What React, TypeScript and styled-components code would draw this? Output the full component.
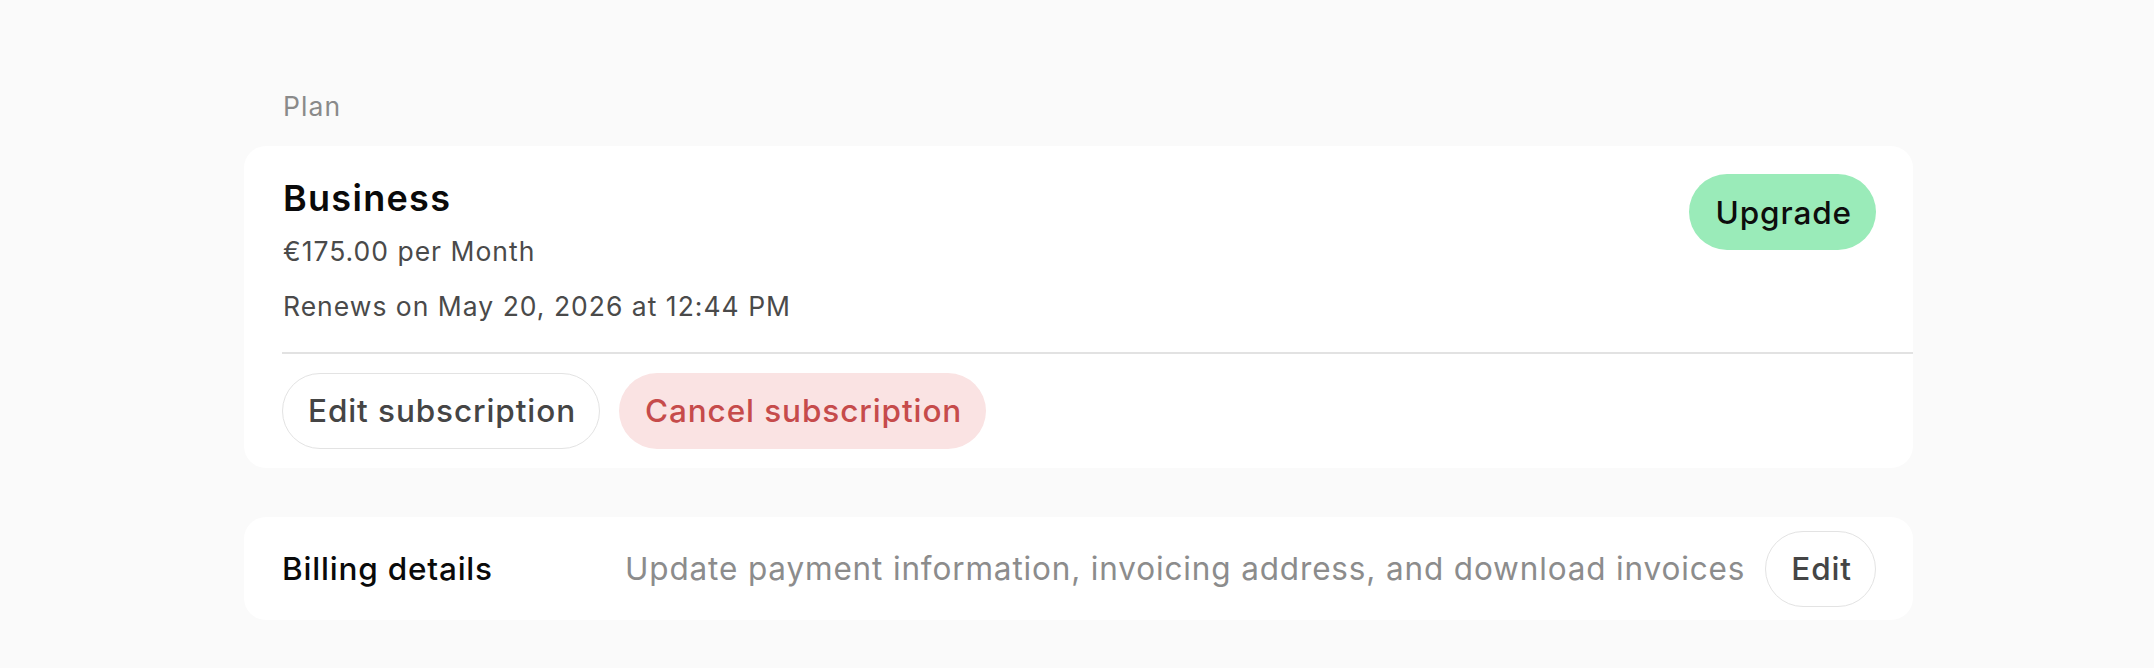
import React from "react";
import styled, { createGlobalStyle } from "styled-components";

const GlobalStyle = createGlobalStyle`
  html, body {
    margin: 0;
    padding: 0;
    background: #fafafa;
    font-family: Inter, "Noto Sans", "Liberation Sans", sans-serif;
    -webkit-font-smoothing: antialiased;
  }
`;

const Page = styled.div`
  width: 1669px;
  margin-left: 244px;
  padding-top: 86px;
  display: flex;
  flex-direction: column;
`;

const SectionLabel = styled.div`
  font-size: 26.5px;
  letter-spacing: 1.1px;
  line-height: 40px;
  color: #8a8a8a;
  padding-left: 39px;
  margin-bottom: 20px;
`;

const Card = styled.div`
  background: #ffffff;
  border-radius: 22px;
`;

const PlanCard = styled(Card)`
  padding-top: 28px;
`;

const Header = styled.div`
  display: flex;
  justify-content: space-between;
  align-items: flex-start;
  padding: 0 37px 0 39px;
`;

const Info = styled.div`
  display: flex;
  flex-direction: column;
`;

const PlanName = styled.div`
  font-size: 36px;
  letter-spacing: 1.3px;
  line-height: 46px;
  margin-top: 1px;
  font-weight: 600;
  color: #0a0a0a;
`;

const Detail = styled.div<{ $gap: number }>`
  font-size: 26.5px;
  letter-spacing: 1px;
  line-height: 40px;
  color: #4a4a4a;
  margin-top: ${(p) => p.$gap}px;
`;

const Divider = styled.div`
  height: 1.5px;
  background: #e2e2e2;
  margin: 26px 0 0 38px;
`;

const Actions = styled.div`
  display: flex;
  gap: 19px;
  padding: 19px 38px 19px 38px;
`;

const Pill = styled.button<{ $variant: "outline" | "danger" | "success" }>`
  font-family: inherit;
  font-size: 31.5px;
  letter-spacing: 0.9px;
  font-weight: 500;
  height: 76px;
  padding: 0 23px 0 25px;
  border-radius: 38px;
  cursor: pointer;
  white-space: nowrap;
  display: inline-flex;
  align-items: center;
  justify-content: center;
  box-sizing: border-box;
  border: 1.5px solid
    ${(p) => (p.$variant === "outline" ? "#e3e3e3" : "transparent")};
  background: ${(p) =>
    p.$variant === "danger"
      ? "#fae3e3"
      : p.$variant === "success"
      ? "#9aebb9"
      : "#ffffff"};
  color: ${(p) =>
    p.$variant === "danger"
      ? "#c64b4b"
      : p.$variant === "success"
      ? "#0d0d0d"
      : "#454545"};
`;

const BillingCard = styled(Card)`
  margin-top: 49px;
  display: grid;
  grid-template-columns: 343px 1fr auto;
  align-items: center;
  padding: 14px 37px 13px 38px;
`;

const BillingTitle = styled.div`
  font-size: 31.5px;
  letter-spacing: 0.8px;
  font-weight: 500;
  color: #0a0a0a;
`;

const BillingDesc = styled.div`
  font-size: 31.5px;
  letter-spacing: 0.85px;
  color: #8c8c8c;
  white-space: nowrap;
`;

export default function App() {
  return (
    <>
      <GlobalStyle />
      <Page>
        <SectionLabel>Plan</SectionLabel>
        <PlanCard>
          <Header>
            <Info>
              <PlanName>Business</PlanName>
              <Detail $gap={10}>€175.00 per Month</Detail>
              <Detail $gap={15}>Renews on May 20, 2026 at 12:44 PM</Detail>
            </Info>
            <Pill $variant="success">Upgrade</Pill>
          </Header>
          <Divider />
          <Actions>
            <Pill $variant="outline">Edit subscription</Pill>
            <Pill $variant="danger">Cancel subscription</Pill>
          </Actions>
        </PlanCard>
        <BillingCard>
          <BillingTitle>Billing details</BillingTitle>
          <BillingDesc>
            Update payment information, invoicing address, and download invoices
          </BillingDesc>
          <Pill $variant="outline">Edit</Pill>
        </BillingCard>
      </Page>
    </>
  );
}
